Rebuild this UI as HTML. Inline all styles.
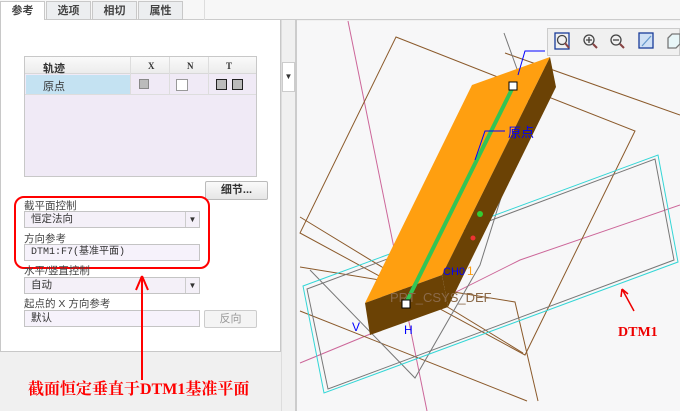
<!DOCTYPE html>
<html><head><meta charset="utf-8"><style>
*{margin:0;padding:0;box-sizing:border-box}
body{width:680px;height:411px;overflow:hidden;background:#f0f0f0;font-family:"Liberation Sans","Noto Sans CJK SC",sans-serif;font-size:11px;color:#333;position:relative}
.a{position:absolute}
.tab{position:absolute;top:1px;height:19px;border:1px solid #c8c8c8;background:#eceef0;text-align:center;line-height:18px;font-size:11px;font-weight:bold;color:#444}
.lbl{position:absolute;left:24px;font-size:10.5px;color:#444}
.box{position:absolute;left:24px;width:176px;height:17px;border:1px solid #c4c4c4;background:#f6f2fb;font-size:10.5px;line-height:15px;padding-left:6px;color:#333}
.dd{position:absolute;right:0;top:0;width:14px;height:15px;border-left:1px solid #ccc;font-size:8px;text-align:center;color:#333}
</style></head><body>
<div class="a" style="left:0;top:0;width:680px;height:20px;background:#f7f7f7;border-bottom:1px solid #ccc"></div>
<div class="a" style="left:204px;top:0;width:1px;height:20px;background:#ddd"></div>
<div class="tab" style="left:0;width:45px;background:#fff;border-bottom:none;height:20px">参考</div>
<div class="tab" style="left:46px;width:45px">选项</div>
<div class="tab" style="left:92px;width:45px">相切</div>
<div class="tab" style="left:138px;width:45px">属性</div>
<div class="a" style="left:0;top:20px;width:281px;height:332px;background:#fff;border:1px solid #c8c8c8;border-top:none"></div>
<div class="a" style="left:281px;top:20px;width:15px;height:391px;background:#f0f0f0;border-left:1px solid #ddd"></div>
<div class="a" style="left:282px;top:62px;width:13px;height:30px;background:#fff;border:1px solid #ccc;font-size:8px;text-align:center;line-height:28px">▼</div>
<div class="a" style="left:295px;top:20px;width:2px;height:391px;background:#ccc"></div>
<!-- table -->
<div class="a" style="left:24px;top:56px;width:233px;height:121px;border:1px solid #c8c8c8;background:#f0eaf6"></div>
<div class="a" style="left:25px;top:57px;width:231px;height:17px;background:linear-gradient(#fafafa,#ececec);border-bottom:1px solid #d8d8d8"></div>
<div class="a" style="left:130px;top:57px;width:1px;height:37px;background:#ddd"></div>
<div class="a" style="left:169px;top:57px;width:1px;height:37px;background:#ddd"></div>
<div class="a" style="left:208px;top:57px;width:1px;height:37px;background:#ddd"></div>
<div class="a" style="left:43px;top:60px;font-weight:bold;font-size:11px">轨迹</div>
<div class="a" style="left:148px;top:61px;font-weight:bold;font-size:9px;font-family:'Liberation Serif',serif">X</div>
<div class="a" style="left:187px;top:61px;font-weight:bold;font-size:9px;font-family:'Liberation Serif',serif">N</div>
<div class="a" style="left:226px;top:61px;font-weight:bold;font-size:9px;font-family:'Liberation Serif',serif">T</div>
<div class="a" style="left:26px;top:75px;width:104px;height:19px;background:#c4e2f2"></div>
<div class="a" style="left:25px;top:94px;width:231px;height:1px;background:#ddd"></div>
<div class="a" style="left:43px;top:78px;font-size:11px">原点</div>
<div class="a" style="left:139px;top:79px;width:10px;height:10px;background:#bbb;border:1px solid #888"></div>
<div class="a" style="left:176px;top:79px;width:12px;height:12px;background:#fff;border:1px solid #999"></div>
<div class="a" style="left:216px;top:79px;width:11px;height:11px;background:#bbb;border:1px solid #222"></div>
<div class="a" style="left:232px;top:79px;width:11px;height:11px;background:#bbb;border:1px solid #222"></div>
<div class="a" style="left:205px;top:181px;width:63px;height:19px;border:1px solid #bbb;border-radius:2px;background:linear-gradient(#fafafa,#e6e6e6);text-align:center;line-height:17px;font-weight:bold;font-size:11px">细节...</div>
<div class="a" style="left:14px;top:196px;width:196px;height:73px;border:2px solid #f00;border-radius:10px"></div>
<div class="lbl" style="top:198px">截平面控制</div>
<div class="box" style="top:211px;background:#f4f0f8">恒定法向<div class="dd">▼</div></div>
<div class="lbl" style="top:231px">方向参考</div>
<div class="box" style="top:244px;font-size:10px;font-family:'Liberation Mono','Noto Sans CJK SC',monospace">DTM1:F7(基准平面)</div>
<div class="lbl" style="top:263px">水平/竖直控制</div>
<div class="box" style="top:277px;background:#f4f0f8">自动<div class="dd">▼</div></div>
<div class="lbl" style="top:296px">起点的 X 方向参考</div>
<div class="box" style="top:310px">默认</div>
<div class="a" style="left:204px;top:310px;width:53px;height:18px;border:1px solid #ccc;border-radius:2px;background:#f4f4f4;text-align:center;line-height:16px;color:#999">反向</div>
<!-- viewport -->
<svg class="a" style="left:297px;top:21px" width="383" height="390" viewBox="297 21 383 390">
<rect x="297" y="21" width="383" height="390" fill="#f7f7f8"/>
<g fill="none" stroke-width="1">
<path d="M348 21 L427 411" stroke="#cc6699"/>
<path d="M300 363 L380 330 L520 260 L680 205" stroke="#cc6699"/>
<path d="M396 37 L635 131 L525 355 L300 233 Z" stroke="#8b5a2b"/>
<path d="M300 217 L523 353 M300 267 L515 302 L538 401 M300 311 L527 401 M505 53 L680 115" stroke="#8b5a2b"/>
<path d="M504 33 L530 105 L480 265 L415 378 L310 270" stroke="#777"/>
<path d="M303 286 L658 155 L678 262 L324 393 Z" stroke="#33d6d6"/>
<path d="M307 289 L655 159 L674 260 L328 389 Z" stroke="#777"/>
</g>
<polygon points="472,85 550,57 442,275 365,303" fill="#ff9f10"/>
<polygon points="550,57 556,87 448,307 442,275" fill="#6b4205"/>
<polygon points="365,303 442,275 448,307 370,335" fill="#6b4205"/>
<path d="M513 87 L405 305" stroke="#33c455" stroke-width="4"/>
<path d="M545 51 L525 51 L518 75" stroke="#00f" fill="none"/>
<path d="M505 131 L485 131 L475 160" stroke="#00f" fill="none"/>
<text x="508" y="137" fill="#00f" font-size="13" font-family="Liberation Sans,Noto Sans CJK SC,sans-serif">原点</text>
<text x="443" y="275" fill="#00f" font-size="11" font-family="Liberation Sans,sans-serif">CH0 </text>
<text x="467" y="275" fill="#ff9f10" font-size="12" font-family="Liberation Sans,sans-serif">1</text>
<text x="390" y="302" fill="#8b6a4a" font-size="13" font-family="Liberation Sans,sans-serif">PRT_CSYS_DEF</text>
<text x="352" y="331" fill="#00f" font-size="12">V</text>
<text x="404" y="334" fill="#00f" font-size="12">H</text>
<rect x="402" y="300" width="8" height="8" fill="#fff" stroke="#000"/>
<rect x="509" y="82" width="8" height="8" fill="#fff" stroke="#000"/>
<circle cx="480" cy="214" r="3" fill="#3c3"/><circle cx="473" cy="238" r="2.5" fill="#e33"/>
<text x="618" y="336" fill="#e00" font-size="14" font-weight="bold" font-family="Liberation Serif,serif">DTM1</text>
<path d="M634 311 L622 289 M622 289 L621 297 M622 289 L628 294" stroke="#e00" stroke-width="1.5" fill="none"/>
</svg>
<div class="a" style="left:547px;top:28px;width:133px;height:28px;background:#f0f0f0;border:1px solid #ccc"></div>
<svg class="a" style="left:547px;top:28px" width="133" height="28">
<g stroke="#444" fill="none" stroke-width="1.3">
<rect x="8" y="5" width="14" height="16" stroke="#1a3c99"/><circle cx="15" cy="12" r="4.5"/><path d="M18 15 L22 20" stroke="#844" stroke-width="2"/>
<circle cx="42" cy="12" r="5"/><path d="M39 12h6M42 9v6"/><path d="M46 16 L50 20" stroke="#844" stroke-width="2"/>
<circle cx="69" cy="12" r="5"/><path d="M66 12h6"/><path d="M73 16 L77 20" stroke="#844" stroke-width="2"/>
<rect x="92" y="5" width="14" height="15" stroke="#1a3c99" fill="#cfe0f5"/><path d="M95 18 L104 8" stroke="#69c"/>
<path d="M121 10 L125 6 L133 6 L133 16 L129 20 L121 20 Z" fill="#e8f6f8" stroke="#777"/>
</g>
</svg>
<!-- red arrow -->
<svg class="a" style="left:130px;top:272px" width="30" height="110">
<path d="M12 108 V6 M12 4 L6 18 M12 4 L18 18" stroke="#f00" stroke-width="2" fill="none"/>
</svg>
<div class="a" style="left:28px;top:376px;color:#f00;font-weight:bold;font-size:16px;font-family:'Liberation Serif','Noto Serif CJK SC',serif;white-space:nowrap">截面恒定垂直于DTM1基准平面</div>
</body></html>
